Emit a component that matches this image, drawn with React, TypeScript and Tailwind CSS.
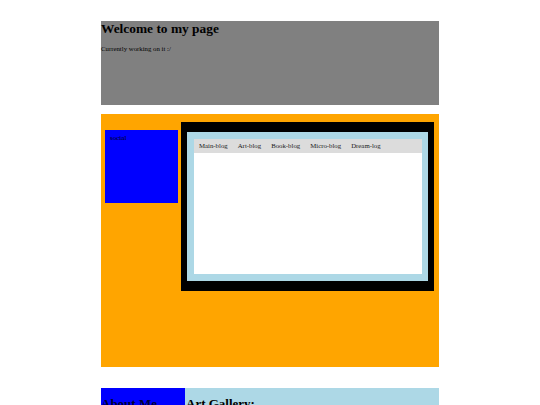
import React from 'react';

const navItems = ['Main-blog', 'Art-blog', 'Book-blog', 'Micro-blog', 'Dream-log'];

export default function App() {
    return (
        <div className="min-h-screen bg-white pt-[21px] font-['Liberation_Serif',serif] text-black">
            <div className="mx-auto w-[338px]">
                {/* header */}
                <div className="h-[84px] bg-[#808080]">
                    <h1 className="text-[13.4px] font-bold leading-[15px]">Welcome to my page</h1>
                    <p className="mt-[9px] text-[6.8px] leading-[8px]">Currently working on it :/</p>
                </div>

                {/* main area */}
                <div className="mt-[9px] flex h-[253px] items-start bg-[#ffa500]">
                    <div className="ml-[4px] mt-[16px] h-[73px] w-[73px] bg-[#0000ff] pl-[5px] pt-[4px] text-[7px] leading-[8px] text-black">
                        social
                    </div>
                    <div className="ml-[3px] mt-[8px] h-[169px] w-[253px] bg-black pl-[6px] pt-[10px]">
                        <div className="h-[149px] w-[241px] bg-[#add8e6] pl-[7px] pt-[7px]">
                            <div className="h-[135px] w-[228px] bg-white">
                                <div className="flex h-[14px] items-center gap-[10px] bg-[#dcdcdc] pl-[5px] text-[6.8px] text-[#1a1a1a]">
                                    {navItems.map((item) => (
                                        <span key={item}>{item}</span>
                                    ))}
                                </div>
                            </div>
                        </div>
                    </div>
                </div>

                {/* bottom row */}
                <div className="mt-[21px] flex h-[80px]">
                    <div className="w-[84px] bg-[#0000ff]">
                        <h2 className="pt-[8px] text-[13px] font-bold leading-[15px] text-[#000033]">About Me</h2>
                    </div>
                    <div className="flex-1 bg-[#add8e6] pl-[1px]">
                        <h2 className="pt-[8px] text-[13px] font-bold leading-[15px]">Art Gallery:</h2>
                    </div>
                </div>
            </div>
        </div>
    );
}
